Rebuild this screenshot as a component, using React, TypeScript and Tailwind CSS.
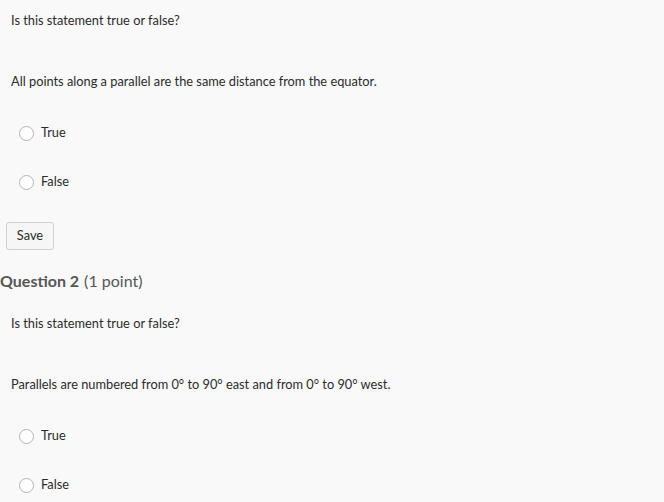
import React from "react";

function Radio({ label }: { label: string }) {
  return (
    <div className="flex h-[40px] items-center pl-[19px]">
      <span className="box-border inline-block h-[15px] w-[15px] rounded-full border border-[#b5b5b5] bg-white" />
      <span className="ml-[7px]">{label}</span>
    </div>
  );
}

export default function App() {
  return (
    <div
      className="min-h-screen w-full bg-[#f9f9f9] pt-[1px] text-[12.8px] text-[#2b2b2b]"
      style={{ fontFamily: "Lato, 'Open Sans', sans-serif" }}
    >
      <div className="flex h-[40px] items-center pl-[11px]">Is this statement true or false?</div>
      <div className="mt-[21px] flex h-[40px] items-center pl-[11px]">
        All points along a parallel are the same distance from the equator.
      </div>
      <div className="mt-[11px]">
        <Radio label="True" />
      </div>
      <div className="mt-[9px]">
        <Radio label="False" />
      </div>
      <div className="mt-[20px] pl-[6px]">
        <button className="box-border h-[28px] w-[48px] rounded-[3px] border border-[#d0d0d0] bg-[#f6f6f6] text-[12.8px] text-[#2b2b2b]">
          Save
        </button>
      </div>
      <div className="mt-[16px] flex h-[30px] items-center text-[16px] text-[#565656]">
        <span className="font-bold">Question 2</span>
        <span className="ml-[5px]">(1 point)</span>
      </div>
      <div className="mt-[8px] flex h-[40px] items-center pl-[11px]">Is this statement true or false?</div>
      <div className="mt-[21px] flex h-[40px] items-center pl-[11px]">
        Parallels are numbered from 0° to 90° east and from 0° to 90° west.
      </div>
      <div className="mt-[11px]">
        <Radio label="True" />
      </div>
      <div className="mt-[9px]">
        <Radio label="False" />
      </div>
    </div>
  );
}
